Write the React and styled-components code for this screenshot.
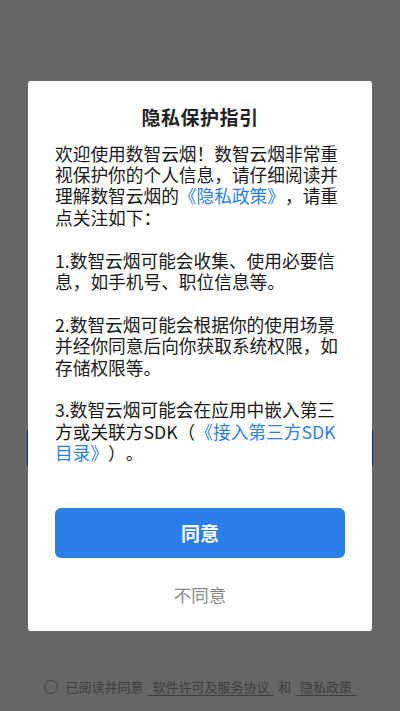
import React, { useState } from 'react';
import styled, { createGlobalStyle } from 'styled-components';

const GlobalStyle = createGlobalStyle`
  * { box-sizing: border-box; }
  html, body {
    margin: 0;
    padding: 0;
    background: #ffffff;
    font-family: "Noto Sans CJK SC", "Noto Sans", Roboto, sans-serif;
    text-spacing-trim: space-all;
  }
`;

export default function App() {
  const [checked, setChecked] = useState(false);

  return (
    <>
      <GlobalStyle />
      <Page>
        <LoginButton>登录</LoginButton>
        <Footer>
          <Radio $checked={checked} onClick={() => setChecked((v) => !v)} />
          <span>{'已阅读并同意 '}</span>
          <FooterLink>{' 软件许可及服务协议 '}</FooterLink>
          <span>{' 和 '}</span>
          <FooterLink>{' 隐私政策 '}</FooterLink>
        </Footer>
      </Page>
      <Overlay>
        <Dialog>
          <Title>隐私保护指引</Title>
          <Body>
            <p>
              欢迎使用数智云烟！数智云烟非常重视保护你的个人信息，请仔细阅读并理解数智云烟的
              <Link>《隐私政策》</Link>，请重点关注如下：
            </p>
            <p>1.数智云烟可能会收集、使用必要信息，如手机号、职位信息等。</p>
            <p>2.数智云烟可能会根据你的使用场景并经你同意后向你获取系统权限，如存储权限等。</p>
            <p>
              3.数智云烟可能会在应用中嵌入第三方或关联方SDK（<Link>《接入第三方SDK目录》</Link>）。
            </p>
          </Body>
          <AgreeButton>同意</AgreeButton>
          <DisagreeButton>不同意</DisagreeButton>
        </Dialog>
      </Overlay>
    </>
  );
}

const Page = styled.div`
  display: flex;
  flex-direction: column;
  align-items: center;
  min-height: 711px;
  padding-top: 428px;
`;

const LoginButton = styled.div`
  width: 346px;
  height: 40px;
  border-radius: 4px;
  background: #2b7fec;
  color: #ffffff;
  font-size: 16px;
  display: flex;
  align-items: center;
  justify-content: center;
`;

const Footer = styled.div`
  margin-top: auto;
  padding-bottom: 14px;
  display: flex;
  align-items: center;
  justify-content: center;
  font-size: 13px;
  line-height: 20px;
  word-spacing: 1.5px;
  color: #999999;
  white-space: pre;
`;

const Radio = styled.span`
  width: 14px;
  height: 14px;
  margin-right: 8px;
  border-radius: 50%;
  border: 1px solid #999999;
  background: ${({ $checked }) => ($checked ? '#2b7fec' : 'transparent')};
  cursor: pointer;
`;

const FooterLink = styled.span`
  text-decoration: underline;
  text-underline-offset: 3px;
  white-space: pre;
`;

const Overlay = styled.div`
  position: fixed;
  inset: 0;
  background: rgba(0, 0, 0, 0.6);
  display: flex;
  align-items: center;
  justify-content: center;
`;

const Dialog = styled.div`
  width: 344px;
  height: 550px;
  background: #ffffff;
  border-radius: 3px;
  padding: 23px 27px 0;
  display: flex;
  flex-direction: column;
`;

const Title = styled.h2`
  margin: 0;
  text-align: center;
  font-size: 19px;
  font-weight: 700;
  letter-spacing: 0.5px;
  line-height: 26px;
  color: #222222;
`;

const Body = styled.div`
  margin-top: 13px;
  font-size: 17.7px;
  line-height: 21.4px;
  color: #1a1a1a;

  p {
    margin: 0 0 21.4px;
  }
  p:last-child {
    margin-bottom: 0;
  }
`;

const Link = styled.span`
  color: #2b7fec;
`;

const AgreeButton = styled.button`
  margin-top: 44px;
  height: 50px;
  width: 100%;
  border: none;
  border-radius: 6px;
  background: #2a7fec;
  color: #ffffff;
  font-family: inherit;
  font-size: 19px;
  font-weight: 700;
  cursor: pointer;
`;

const DisagreeButton = styled.button`
  margin-top: 24px;
  border: none;
  background: none;
  color: #8a8a8a;
  font-family: inherit;
  font-size: 17.5px;
  line-height: 24px;
  cursor: pointer;
`;
